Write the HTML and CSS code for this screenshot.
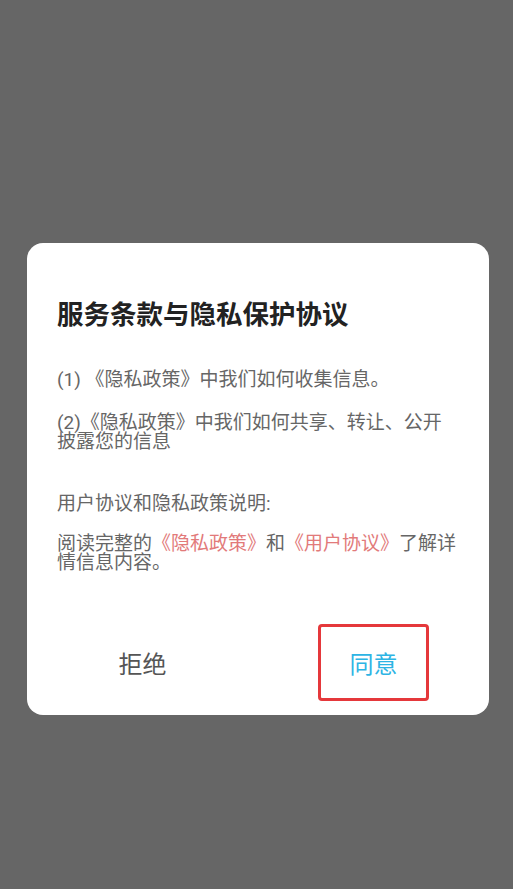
FILE: index.html
```html
<!DOCTYPE html>
<html lang="zh-CN">
<head>
<meta charset="utf-8">
<title>服务条款与隐私保护协议</title>
<link rel="stylesheet" href="styles.css">
</head>
<body>
<div class="screen">
  <div class="dialog">
    <h1 class="title">服务条款与隐私保护协议</h1>
    <div class="content">
      <p class="para p1">(1) 《隐私政策》中我们如何收集信息。</p>
      <p class="para p2">(2)《隐私政策》中我们如何共享、转让、公开披露您的信息</p>
      <p class="para p3">用户协议和隐私政策说明:</p>
      <p class="para p4">阅读完整的<span class="link">《隐私政策》</span>和<span class="link">《用户协议》</span>了解详情信息内容。</p>
    </div>
    <div class="actions">
      <div class="half"><button class="btn btn-reject">拒绝</button></div>
      <div class="half"><button class="btn btn-agree">同意</button></div>
    </div>
  </div>
</div>
</body>
</html>
```

FILE: styles.css
```css
html, body {
  margin: 0;
  padding: 0;
  background: #666666;
}
body {
  font-family: Roboto, "Noto Sans CJK SC", sans-serif;
}
.screen {
  width: 513px;
  height: 889px;
  padding-top: 243px;
  box-sizing: border-box;
}
.dialog {
  margin-left: 27px;
  width: 462px;
  height: 472px;
  background: #ffffff;
  border-radius: 16px;
  box-sizing: border-box;
  padding: 57px 30px 0 30px;
  display: flex;
  flex-direction: column;
}
.title {
  margin: 0;
  font-size: 26.5px;
  line-height: 30px;
  font-weight: 700;
  color: #222222;
}
.content {
  margin-top: 40px;
}
.para {
  margin: 0;
  font-size: 19px;
  line-height: 19px;
  color: #666666;
}
.p1 { margin-bottom: 24px; }
.p2 { margin-bottom: 43px; }
.p3 { margin-bottom: 21px; }
.link { color: #e27a7a; }
.actions {
  margin: auto -30px 14px -30px;
  display: flex;
}
.half {
  flex: 1;
  display: flex;
  justify-content: center;
}
.btn {
  width: 111px;
  height: 77px;
  padding: 0;
  background: transparent;
  border: 3px solid transparent;
  border-radius: 4px;
  font-family: Roboto, "Noto Sans CJK SC", sans-serif;
  font-size: 24px;
  box-sizing: border-box;
}
.btn-reject { color: #555555; }
.btn-agree {
  color: #2db4e4;
  border-color: #e5383b;
}
```
